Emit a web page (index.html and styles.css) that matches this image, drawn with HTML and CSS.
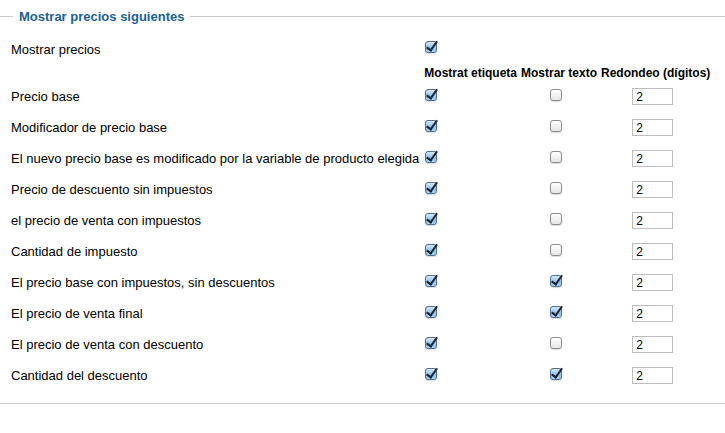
FILE: index.html
```html
<!DOCTYPE html>
<html lang="es">
<head>
    <meta charset="UTF-8">
    <title>Mostrar precios</title>
    <link rel="stylesheet" href="styles.css">
</head>
<body>
    <fieldset class="prices">
        <legend>Mostrar precios siguientes</legend>
        <table class="price-table">
            <tr class="top-row">
                <td class="label">Mostrar precios</td>
                <td><input type="checkbox" checked></td>
                <td></td>
                <td></td>
            </tr>
            <tr class="head-row">
                <th></th>
                <th class="left">Mostrat etiqueta</th>
                <th>Mostrar texto</th>
                <th>Redondeo (d&iacute;gitos)</th>
            </tr>
            <tr>
                <td class="label">Precio base</td>
                <td><input type="checkbox" checked></td>
                <td class="mid"><input type="checkbox"></td>
                <td class="mid"><input type="text" class="digits" value="2"></td>
            </tr>
            <tr>
                <td class="label">Modificador de precio base</td>
                <td><input type="checkbox" checked></td>
                <td class="mid"><input type="checkbox"></td>
                <td class="mid"><input type="text" class="digits" value="2"></td>
            </tr>
            <tr>
                <td class="label">El nuevo precio base es modificado por la variable de producto elegida</td>
                <td><input type="checkbox" checked></td>
                <td class="mid"><input type="checkbox"></td>
                <td class="mid"><input type="text" class="digits" value="2"></td>
            </tr>
            <tr>
                <td class="label">Precio de descuento sin impuestos</td>
                <td><input type="checkbox" checked></td>
                <td class="mid"><input type="checkbox"></td>
                <td class="mid"><input type="text" class="digits" value="2"></td>
            </tr>
            <tr>
                <td class="label">el precio de venta con impuestos</td>
                <td><input type="checkbox" checked></td>
                <td class="mid"><input type="checkbox"></td>
                <td class="mid"><input type="text" class="digits" value="2"></td>
            </tr>
            <tr>
                <td class="label">Cantidad de impuesto</td>
                <td><input type="checkbox" checked></td>
                <td class="mid"><input type="checkbox"></td>
                <td class="mid"><input type="text" class="digits" value="2"></td>
            </tr>
            <tr>
                <td class="label">El precio base con impuestos, sin descuentos</td>
                <td><input type="checkbox" checked></td>
                <td class="mid"><input type="checkbox" checked></td>
                <td class="mid"><input type="text" class="digits" value="2"></td>
            </tr>
            <tr>
                <td class="label">El precio de venta final</td>
                <td><input type="checkbox" checked></td>
                <td class="mid"><input type="checkbox" checked></td>
                <td class="mid"><input type="text" class="digits" value="2"></td>
            </tr>
            <tr>
                <td class="label">El precio de venta con descuento</td>
                <td><input type="checkbox" checked></td>
                <td class="mid"><input type="checkbox"></td>
                <td class="mid"><input type="text" class="digits" value="2"></td>
            </tr>
            <tr>
                <td class="label">Cantidad del descuento</td>
                <td><input type="checkbox" checked></td>
                <td class="mid"><input type="checkbox" checked></td>
                <td class="mid"><input type="text" class="digits" value="2"></td>
            </tr>
        </table>
    </fieldset>
</body>
</html>
```

FILE: styles.css
```css
body {
    font-family: 'Liberation Sans', Arial, sans-serif;
    font-size: 12px;
    color: #000;
    background: #fff;
    margin: 0;
    padding: 0;
}
.prices {
    margin: 9px 0 0 0;
    padding: 0 0 12px 9px;
    border: none;
    border-top: 1px solid #c8c8c8;
    border-bottom: 1px solid #c8c8c8;
}
.prices legend {
    margin-left: 4px;
    padding: 0 6px;
    font-size: 13px;
    font-weight: bold;
    color: #1d5f96;
}
.price-table {
    border-collapse: collapse;
    margin-top: 10px;
}
.price-table td, .price-table th {
    padding: 0 2px;
    height: 31px;
    text-align: left;
    vertical-align: middle;
}
.price-table .top-row td {
    height: 30px;
}
.price-table th {
    height: 17px;
    font-weight: bold;
    text-align: center;
    white-space: nowrap;
}
.price-table th.left {
    text-align: left;
}
.price-table td.mid {
    text-align: center;
}
.price-table td.label {
    padding-right: 3px;
    font-size: 13px;
    white-space: nowrap;
}

/* aqua style checkboxes */
input[type="checkbox"] {
    appearance: none;
    -webkit-appearance: none;
    position: relative;
    width: 12px;
    height: 12px;
    margin: 0 0 4px 1px;
    border: 1px solid #8c8c8c;
    border-radius: 3px;
    background: linear-gradient(#ffffff, #e6e6e6);
    box-shadow: 0 1px 1px rgba(0, 0, 0, 0.15);
    vertical-align: middle;
}
.mid input[type="checkbox"] {
    margin: 0 6px 4px 0;
}
input[type="checkbox"]:checked {
    border-color: #4f6f93;
    background: linear-gradient(#d7e9fa, #8dbfec 60%, #a9d3f6);
}
input[type="checkbox"]:checked::after {
    content: '';
    position: absolute;
    left: 3px;
    top: -3px;
    width: 4px;
    height: 10px;
    border-right: 2px solid #1d2430;
    border-bottom: 2px solid #1d2430;
    transform: rotate(35deg);
}
.digits {
    width: 41px;
    height: 17px;
    box-sizing: border-box;
    margin: 0 0 0 -6px;
    padding: 0 3px;
    border: 1px solid #bdbdbd;
    font-family: 'Liberation Sans', Arial, sans-serif;
    font-size: 12px;
    vertical-align: middle;
}
```
